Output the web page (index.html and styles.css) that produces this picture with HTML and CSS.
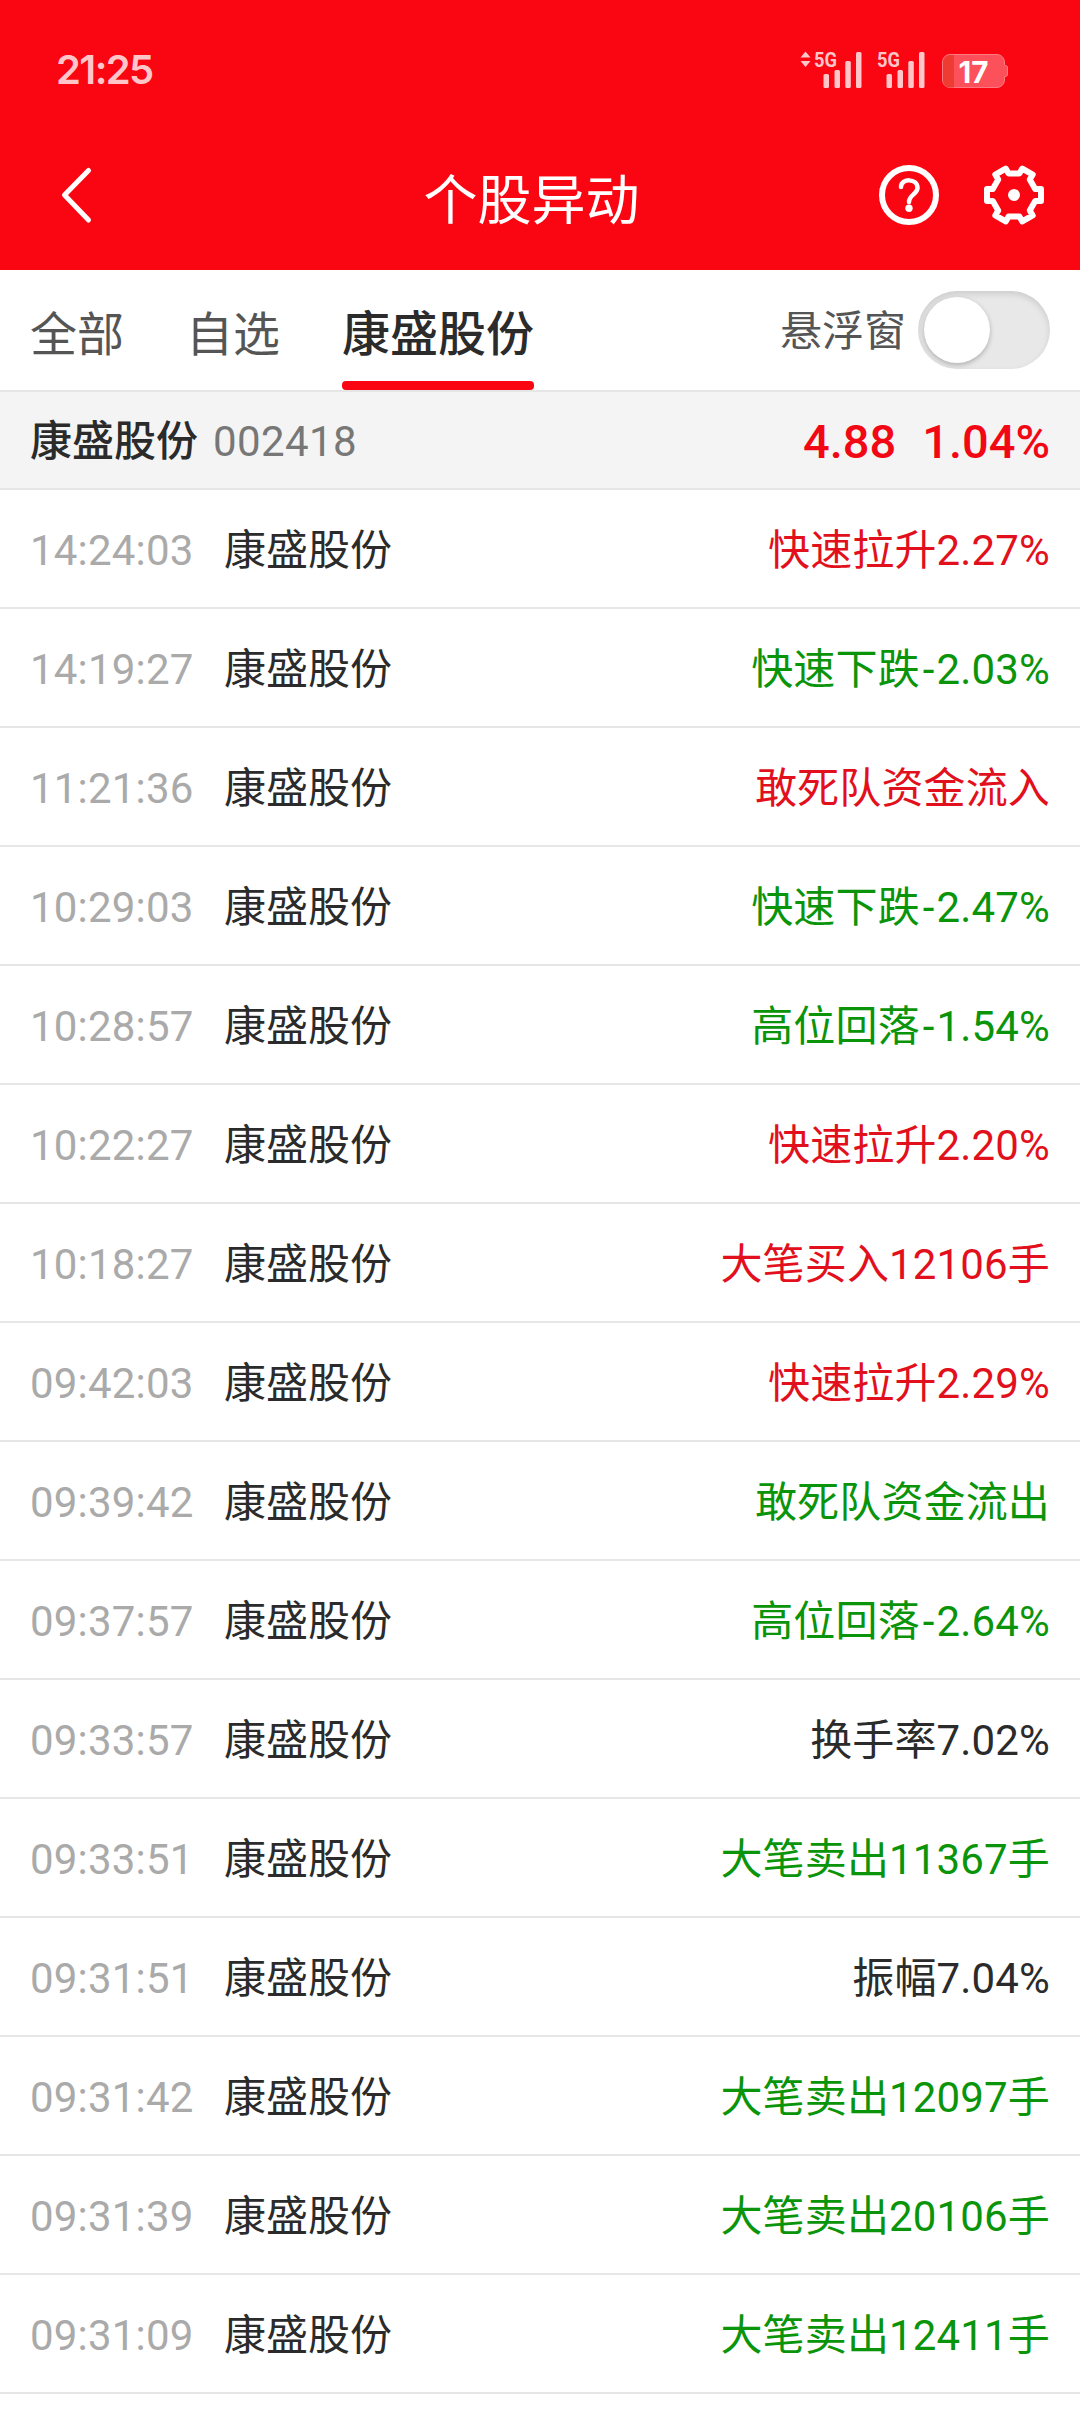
FILE: index.html
```
<!DOCTYPE html>
<html lang="zh-CN">
<head>
  <meta charset="utf-8">
  <title>个股异动</title>
  <link rel="stylesheet" href="styles.css">
</head>
<body>
  <header class="header">
    <div class="status-bar">
      <span class="clock">21:25</span>
      <svg class="status-icons" width="212" height="44" viewBox="800 48 212 44">
        <g class="signal">
          <path d="M800.500 57.500l5-6 5 6zM800.500 61h10l-5 6z"/>
          <text x="814" y="66.700" textLength="23" lengthAdjust="spacingAndGlyphs">5G</text>
          <rect x="823.500" y="74" width="5.500" height="14" rx="1.500"/>
          <rect x="834.500" y="70" width="5.500" height="18" rx="1.500"/>
          <rect x="845.300" y="61" width="5.500" height="27" rx="1.500"/>
          <rect x="856" y="52" width="5.500" height="36" rx="1.500"/>
          <text x="877" y="66.700" textLength="23" lengthAdjust="spacingAndGlyphs">5G</text>
          <rect x="886.500" y="74" width="5.500" height="14" rx="1.500"/>
          <rect x="897.500" y="70" width="5.500" height="18" rx="1.500"/>
          <rect x="908.300" y="61" width="5.500" height="27" rx="1.500"/>
          <rect x="919" y="52" width="5.500" height="36" rx="1.500"/>
        </g>
        <path class="battery" d="M950 54.500h47a7.500 7.500 0 0 1 7.500 7.500v3l3 1.500v9l-3 1.500v3a7.500 7.500 0 0 1-7.500 7.500h-47a7.500 7.500 0 0 1-7.500-7.500v-18a7.500 7.500 0 0 1 7.500-7.500z"/>
        <path class="battery-level" d="M954 55v32.500h-4a7 7 0 0 1-7-7v-18a7.500 7.500 0 0 1 7-7.500z"/>
        <text class="battery-text" x="958.500" y="82.500" textLength="30" lengthAdjust="spacingAndGlyphs">17</text>
      </svg>
    </div>
    <div class="title-bar">
      <svg class="back" width="60" height="60" viewBox="0 0 60 60">
        <path d="M43.500 5.500L19.500 30l24 25"/>
      </svg>
      <h1 class="title">个股异动</h1>
      <div class="actions">
        <svg class="icon" width="66" height="66" viewBox="-33 -33 66 66">
          <circle r="27" stroke-width="6"/>
          <path d="M-8-8C-8-17 8.500-17 8.500-7C8.500-1 0 0 0 7" stroke-width="4.500"/>
          <circle class="dot" cy="13.300" r="3.700"/>
        </svg>
        <svg class="icon" width="66" height="66" viewBox="-33 -33 66 66">
          <path stroke-width="6" d="M21.200-6L27-6L27 6L21.200 6L15.800 15.400L18.700 20.400L8.300 26.400L5.400 21.400L-5.400 21.400L-8.300 26.400L-18.700 20.400L-15.800 15.400L-21.200 6L-27 6L-27-6L-21.200-6L-15.800-15.400L-18.700-20.400L-8.300-26.400L-5.400-21.400L5.400-21.400L8.300-26.400L18.700-20.400L15.800-15.400Z"/>
          <circle class="dot" r="6"/>
        </svg>
      </div>
    </div>
  </header>

  <nav class="tabs">
    <a class="tab">全部</a>
    <a class="tab">自选</a>
    <a class="tab active">康盛股份</a>
    <div class="float-window">
      <span class="float-label">悬浮窗</span>
      <span class="switch"><i class="knob"></i></span>
    </div>
  </nav>

  <section class="quote">
    <span class="quote-name">康盛股份</span>
    <span class="quote-code">002418</span>
    <span class="quote-price">4.88</span>
    <span class="quote-change">1.04%</span>
  </section>

  <ul class="list">
    <li class="row"><span class="time">14:24:03</span><span class="name">康盛股份</span><span class="event up">快速拉升2.27%</span></li>
    <li class="row"><span class="time">14:19:27</span><span class="name">康盛股份</span><span class="event down">快速下跌<span class="minus">-</span>2.03%</span></li>
    <li class="row"><span class="time">11:21:36</span><span class="name">康盛股份</span><span class="event up">敢死队资金流入</span></li>
    <li class="row"><span class="time">10:29:03</span><span class="name">康盛股份</span><span class="event down">快速下跌<span class="minus">-</span>2.47%</span></li>
    <li class="row"><span class="time">10:28:57</span><span class="name">康盛股份</span><span class="event down">高位回落<span class="minus">-</span>1.54%</span></li>
    <li class="row"><span class="time">10:22:27</span><span class="name">康盛股份</span><span class="event up">快速拉升2.20%</span></li>
    <li class="row"><span class="time">10:18:27</span><span class="name">康盛股份</span><span class="event up">大笔买入12106手</span></li>
    <li class="row"><span class="time">09:42:03</span><span class="name">康盛股份</span><span class="event up">快速拉升2.29%</span></li>
    <li class="row"><span class="time">09:39:42</span><span class="name">康盛股份</span><span class="event down">敢死队资金流出</span></li>
    <li class="row"><span class="time">09:37:57</span><span class="name">康盛股份</span><span class="event down">高位回落<span class="minus">-</span>2.64%</span></li>
    <li class="row"><span class="time">09:33:57</span><span class="name">康盛股份</span><span class="event">换手率7.02%</span></li>
    <li class="row"><span class="time">09:33:51</span><span class="name">康盛股份</span><span class="event down">大笔卖出11367手</span></li>
    <li class="row"><span class="time">09:31:51</span><span class="name">康盛股份</span><span class="event">振幅7.04%</span></li>
    <li class="row"><span class="time">09:31:42</span><span class="name">康盛股份</span><span class="event down">大笔卖出12097手</span></li>
    <li class="row"><span class="time">09:31:39</span><span class="name">康盛股份</span><span class="event down">大笔卖出20106手</span></li>
    <li class="row"><span class="time">09:31:09</span><span class="name">康盛股份</span><span class="event down">大笔卖出12411手</span></li>
  </ul>
</body>
</html>
```

FILE: styles.css
```
* {
  box-sizing: border-box;
}

body {
  margin: 0;
  height: 2412px;
  overflow: hidden;
  background: #fff;
  color: #2b2b2b;
  font-family: Roboto, "Noto Sans CJK SC", sans-serif;
  font-size: 42px;
}

.header {
  height: 270px;
  background: #fa0512;
  color: #fff;
}

.status-bar {
  display: flex;
  justify-content: space-between;
  align-items: center;
  height: 140px;
  padding: 0 68px 0 56px;
}

.clock {
  padding-bottom: 2px;
  font-family: Inter, sans-serif;
  font-size: 40px;
  font-weight: 600;
  letter-spacing: -1.6px;
  color: #ffc6ca;
}

.signal {
  fill: #ffc6ca;
  font-family: Roboto, sans-serif;
  font-size: 21px;
  font-weight: 700;
}

.battery {
  fill: #fc505a;
  stroke: #fd7a80;
  stroke-width: 1;
}

.battery-level {
  fill: #ee3c33;
}

.battery-text {
  fill: #fff;
  font-family: Inter, sans-serif;
  font-size: 30px;
  font-weight: 700;
}

.title-bar {
  display: flex;
  justify-content: space-between;
  align-items: center;
  height: 110px;
  padding: 0 33px 0 45px;
}

.back {
  fill: none;
  stroke: #fff;
  stroke-width: 5;
  stroke-linecap: round;
  stroke-linejoin: round;
}

.title {
  margin: 0 0 0 82px;
  padding-top: 2px;
  font-size: 54px;
  font-weight: 400;
}

.actions {
  display: flex;
  gap: 39px;
}

.icon {
  fill: none;
  stroke: #fff;
  stroke-linecap: round;
  stroke-linejoin: round;
}

.icon .dot {
  fill: #fff;
  stroke: none;
}

.tabs {
  display: flex;
  height: 122px;
  padding: 0 30px;
  border-bottom: 2px solid #e6e6e6;
}

.tab {
  height: 120px;
  margin-right: 62px;
  line-height: 129px;
  font-size: 47px;
  color: #555;
}

.tab.active {
  position: relative;
  font-size: 48px;
  font-weight: 500;
  color: #2b2b2b;
}

.tab.active::after {
  content: "";
  position: absolute;
  left: 0;
  right: 0;
  bottom: 0;
  height: 9px;
  border-radius: 4px;
  background: #fa0512;
}

.float-window {
  display: flex;
  align-items: center;
  gap: 12px;
  margin-left: auto;
  color: #555;
}

.float-label {
  padding-top: 4px;
  line-height: 48px;
}

.switch {
  width: 132px;
  height: 78px;
  padding: 6px;
  border-radius: 39px;
  background: #e8e8e8;
  box-shadow: inset 0 3px 6px rgba(0, 0, 0, 0.12);
}

.knob {
  display: block;
  width: 66px;
  height: 66px;
  border-radius: 50%;
  background: #fff;
  box-shadow: 0 2px 5px rgba(0, 0, 0, 0.25);
}

.quote {
  display: flex;
  align-items: center;
  height: 98px;
  padding: 3px 30px 0;
  line-height: 50px;
  background: #f4f4f4;
  border-bottom: 2px solid #e6e6e6;
}

.quote-name {
  font-weight: 500;
}

.quote-code {
  margin-left: 15px;
  letter-spacing: 0.4px;
  color: #777;
}

.quote-price,
.quote-change {
  font-size: 47px;
  font-weight: 500;
  color: #f20815;
}

.quote-price {
  margin-left: auto;
}

.quote-change {
  margin-left: 26px;
}

.list {
  margin: 0;
  padding: 0;
  list-style: none;
}

.row {
  display: flex;
  align-items: center;
  height: 119px;
  padding: 4px 30px 0;
  line-height: 50px;
  border-bottom: 2px solid #e6e6e6;
}

.time {
  width: 194px;
  letter-spacing: 0.2px;
  color: #aaa;
}

.event {
  margin-left: auto;
  letter-spacing: 0.15px;
}

.minus {
  margin: 0 2px 0 3px;
}

.up {
  color: #e2101c;
}

.down {
  color: #0a940a;
}
```
